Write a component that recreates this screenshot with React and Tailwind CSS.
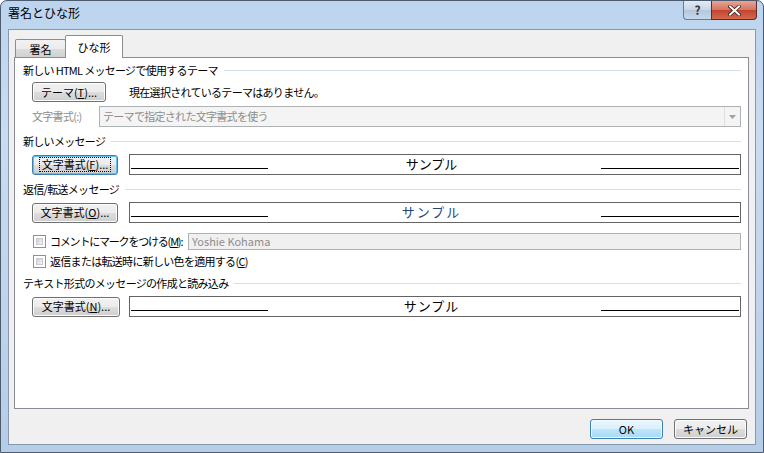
import React from 'react'

const FONT = { fontFamily: '"Noto Sans CJK JP", "Noto Sans", sans-serif' }

function Btn({ children, focused, primary, className = '' }) {
  const base = 'h-[20px] rounded-[3px] border flex items-center justify-center text-[11px] text-black leading-none whitespace-nowrap'
  const skin = primary
    ? 'border-[#3c7fb1] bg-[linear-gradient(to_bottom,#eaf6fd_0%,#d9f0fc_50%,#bee6fd_50%,#a7d9f5_100%)] shadow-[inset_0_0_0_1px_#f4fbff]'
    : focused
      ? 'border-[#3c7fb1] bg-[linear-gradient(to_bottom,#f2f2f2_0%,#ebebeb_50%,#dddddd_50%,#cfcfcf_100%)] shadow-[inset_0_0_0_1px_#5cc1f5]'
      : 'border-[#707070] bg-[linear-gradient(to_bottom,#f2f2f2_0%,#ebebeb_50%,#dddddd_50%,#cfcfcf_100%)] shadow-[inset_0_0_0_1px_#fcfcfc]'
  return (
    <div className={`${base} ${skin} ${className}`}>
      {focused ? (
        <span className="border border-dotted border-black px-[2px] py-[1px]">{children}</span>
      ) : (
        children
      )}
    </div>
  )
}

function Heading({ text, className = '' }) {
  return (
    <div className={`flex items-center h-[16px] pl-[8px] pr-[7px] ${className}`}>
      <span className="text-[11px] text-black whitespace-nowrap leading-none tracking-[-0.7px]">{text}</span>
      <div className="flex-1 h-px bg-[#d5dfe5] ml-[6px]" />
    </div>
  )
}

function Sample({ color = 'text-black', tracking = '' }) {
  return (
    <div className="flex-1 h-[21px] border border-[#646464] bg-white flex items-end pb-[5px] px-[1px]">
      <div className="w-[137px] h-[1.5px] bg-black" />
      <div className={`flex-1 text-center text-[13px] leading-none self-center pt-[3px] pr-[6px] ${color} ${tracking}`}>サンプル</div>
      <div className="w-[138px] h-[1.5px] bg-black" />
    </div>
  )
}

function Check({ children, tight }) {
  return (
    <div className="flex items-center gap-[4px] whitespace-nowrap">
      <div className="w-[13px] h-[13px] border border-[#8f8f8f] bg-white p-[2px] shrink-0">
        <div className="w-full h-full bg-[linear-gradient(135deg,#cbcfd5,#f6f6f6)] border border-[#c8ccd2]" />
      </div>
      <span className={`text-[11px] leading-none ${tight ? 'tracking-[-1.2px]' : 'tracking-[-0.7px]'}`}>{children}</span>
    </div>
  )
}

export default function App() {
  return (
    <div style={FONT} className="w-[764px] h-[453px] bg-[linear-gradient(to_bottom,#bcd4ee,#c9dcf0_30%,#b6cde6)] rounded-t-[7px] border border-[#4c5b6e] flex flex-col relative overflow-hidden">
      {/* title bar */}
      <div className="h-[28px] flex items-start">
        <div className="pl-[7px] pt-[6px] text-[12px] text-black leading-none">署名とひな形</div>
        <div className="ml-auto flex mr-[6px]">
          <div className="w-[28px] h-[19px] rounded-bl-[4px] border border-[#6d7c91] border-t-0 border-r-0 bg-[linear-gradient(to_bottom,#e2ebf5,#c7d6e8_50%,#b3c6dc_50%,#c7d8ea)] flex items-center justify-center text-[12px] text-[#333] font-bold leading-none">?</div>
          <div className="w-[46px] h-[19px] rounded-br-[4px] border border-[#5c2b2b] border-t-0 bg-[linear-gradient(to_bottom,#e8a493,#d37460_50%,#c2432e_50%,#d46a4e)] flex items-center justify-center">
            <svg width="13" height="11" viewBox="0 0 13 11">
              <path d="M2 1.5 L11 9.5 M11 1.5 L2 9.5" stroke="#3a1a1a" strokeWidth="3.6" strokeLinecap="square" />
              <path d="M2 1.5 L11 9.5 M11 1.5 L2 9.5" stroke="#ffffff" strokeWidth="2" strokeLinecap="square" />
            </svg>
          </div>
        </div>
      </div>

      {/* client area */}
      <div className="mx-[7px] h-[416px] bg-[#f0f0f0] border border-[#8799ae] flex flex-col">
        {/* tabs */}
        <div className="flex items-end h-[27px] pl-[6px]">
          <div className="w-[51px] h-[19px] border border-[#898c95] border-b-0 rounded-t-[2px] bg-[linear-gradient(to_bottom,#f2f2f2,#ebebeb_50%,#dddddd_50%,#cfcfcf)] flex items-center justify-center text-[11px] leading-none mb-[-1px]">署名</div>
          <div className="w-[58px] h-[23px] border border-[#898c95] border-b-0 rounded-t-[2px] bg-white flex items-center justify-center text-[11px] leading-none mb-[-1px] relative z-10 -ml-px">ひな形</div>
        </div>
        {/* panel */}
        <div className="ml-[5px] w-[735px] h-[352px] bg-white border border-[#898c95] flex flex-col pt-[4px]">
          <Heading text="新しい HTML メッセージで使用するテーマ" />
          <div className="flex items-center mt-[4px] pl-[17px]">
            <Btn className="w-[74px]">テーマ(<u>T</u>)...</Btn>
            <span className="ml-[23px] text-[11px] leading-none tracking-[-0.7px]">現在選択されているテーマはありません。</span>
          </div>
          <div className="flex items-center mt-[4px] pl-[17px] pr-[7px]">
            <span className="text-[11px] text-[#8d8d8d] leading-none w-[67px] tracking-[-0.7px]">文字書式(:)</span>
            <div className="flex-1 h-[21px] border border-[#adb2b5] bg-[#f4f4f4] flex items-center">
              <span className="flex-1 pl-[3px] text-[11px] text-[#8d8d8d] leading-none tracking-[-0.7px]">テーマで指定された文字書式を使う</span>
              <div className="w-[16px] h-[19px] bg-[#f4f4f4] border-l border-[#dfdfdf] flex items-center justify-center">
                <svg width="7" height="4" viewBox="0 0 7 4"><path d="M0 0 H7 L3.5 4 Z" fill="#a0a0a0" /></svg>
              </div>
            </div>
          </div>

          <Heading text="新しいメッセージ" className="mt-[6px]" />
          <div className="flex items-center mt-[5px] pl-[17px] pr-[7px] gap-[11px]">
            <Btn focused className="w-[86px]">文字書式(<u>F</u>)...</Btn>
            <Sample />
          </div>

          <Heading text="返信/転送メッセージ" className="mt-[6px]" />
          <div className="flex items-center mt-[5px] pl-[17px] pr-[7px] gap-[11px]">
            <Btn className="w-[86px]">文字書式(<u>O</u>)...</Btn>
            <Sample color="text-[#1f497d]" tracking="tracking-[2px]" />
          </div>

          <div className="flex items-center mt-[10px] pl-[18px] pr-[7px]">
            <Check tight>コメントにマークをつける(<u>M</u>):</Check>
            <div className="ml-auto w-[553px] h-[17px] border border-[#adb2b5] bg-[#f0f0f0] flex items-center pl-[3px] text-[11px] text-[#8d8d8d] leading-none">Yoshie Kohama</div>
          </div>
          <div className="flex items-center mt-[3px] pl-[18px] h-[16px]">
            <Check>返信または転送時に新しい色を適用する(<u>C</u>)</Check>
          </div>

          <Heading text="テキスト形式のメッセージの作成と読み込み" className="mt-[6px]" />
          <div className="flex items-center mt-[5px] pl-[17px] pr-[7px] gap-[9px]">
            <Btn className="w-[88px]">文字書式(<u>N</u>)...</Btn>
            <Sample tracking="tracking-[1px]" />
          </div>
        </div>

        {/* bottom buttons */}
        <div className="flex justify-end gap-[11px] mt-[10px] pr-[8px]">
          <Btn primary className="w-[73px]">OK</Btn>
          <Btn className="w-[73px]">キャンセル</Btn>
        </div>
      </div>
    </div>
  )
}
